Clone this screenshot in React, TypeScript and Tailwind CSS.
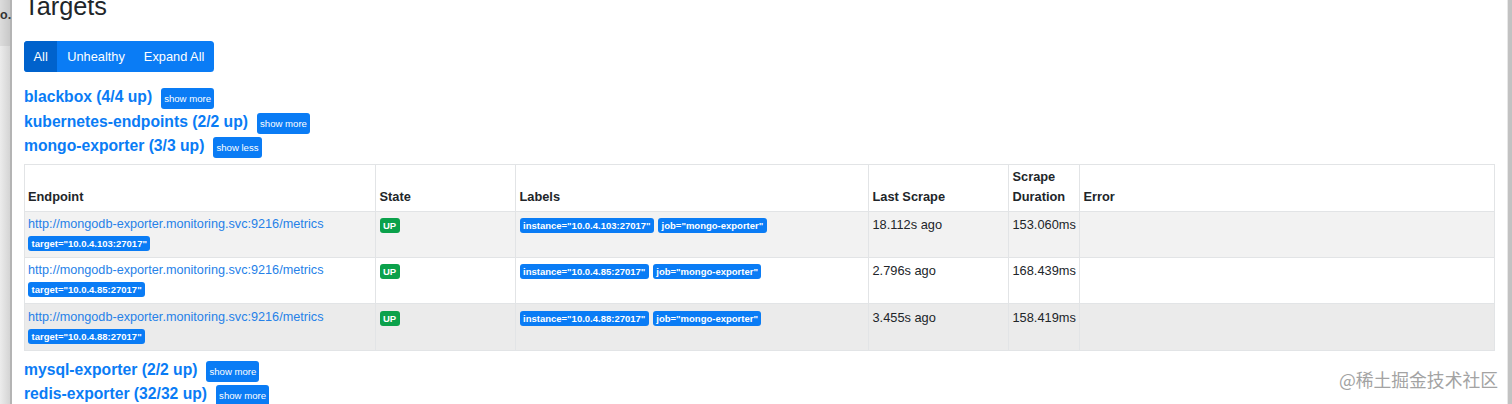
const Btn = ({ children }: { children: string }) => (
  <button className="ml-[9px] h-[21px] rounded-[3px] bg-[#0a7cf5] px-[3px] text-[9.6px] leading-[21px] text-white">{children}</button>
);

const Group = ({ name, btn }: { name: string; btn: string }) => (
  <div className="flex h-[24.5px] items-center">
    <a className="pb-[3.5px] text-[15.7px] font-bold text-[#0a7cf5]">{name}</a>
    <Btn>{btn}</Btn>
  </div>
);

const Badge = ({ children, color = "bg-[#0a7cf5]" }: { children: string; color?: string }) => (
  <span className={`inline-block h-[15px] rounded-[3px] ${color} px-[3.5px] text-[9.5px] font-bold leading-[15px] text-white whitespace-nowrap`}>{children}</span>
);

const rows = [
  { t: "10.0.4.103:27017", last: "18.112s ago", dur: "153.060ms", cls: "h-[46px] bg-[#f2f2f2]" },
  { t: "10.0.4.85:27017", last: "2.796s ago", dur: "168.439ms", cls: "h-[46px] bg-white" },
  { t: "10.0.4.88:27017", last: "3.455s ago", dur: "158.419ms", cls: "h-[46.5px] bg-[#ebebeb] [&>td]:pt-[3.5px]" },
];

const td = "border-l border-[#e2e4e6] px-[3.5px] pt-[2.5px] align-top first:border-l-0 first:pl-[3px]";
const th = "border-l border-[#e2e4e6] px-[3.5px] pb-[4px] align-bottom text-left font-bold first:border-l-0 first:pl-[3px]";

export default function App() {
  return (
    <div className="flex h-[404px] w-[1512px] overflow-hidden bg-white text-[12.8px] text-[#212529] [font-family:'Liberation_Sans',sans-serif]">
      <div className="flex h-full w-[12px] shrink-0 flex-col border-r-[2px] border-[#b4b4b4]">
        <div className="h-[46px] bg-gradient-to-r from-[#dcdcdc] to-[#c8c8c8] pt-[8px] text-[12.5px] font-bold leading-[14px] text-[#333]">o.</div>
        <div className="flex-1 bg-gradient-to-r from-[#ececec] to-[#d4d4d4]" />
      </div>
      <main className="min-w-0 flex-1 overflow-hidden pl-[12px] pr-[13px]">
        <h1 className="mt-[-9px] h-[50px] text-[25.3px] leading-[30px] text-[#212529]">Targets</h1>
        <div className="flex h-[31px] w-[190px] overflow-hidden whitespace-nowrap rounded-[3.5px] bg-[#0a7cf5] text-[12.8px] leading-[31px] text-white">
          <span className="bg-[#0062cc] px-[9.5px]">All</span>
          <span className="px-[10px]">Unhealthy</span>
          <span className="px-[9px]">Expand All</span>
        </div>
        <div className="mt-[14.5px]">
          <Group name="blackbox (4/4 up)" btn="show more" />
          <Group name="kubernetes-endpoints (2/2 up)" btn="show more" />
          <Group name="mongo-exporter (3/3 up)" btn="show less" />
        </div>
        <table className="mt-[4px] w-[1471px] table-fixed border-collapse border border-[#e2e4e6]">
          <colgroup>
            <col className="w-[351px]" />
            <col className="w-[140px]" />
            <col className="w-[353px]" />
            <col className="w-[140px]" />
            <col className="w-[71px]" />
            <col />
          </colgroup>
          <thead>
            <tr className="h-[47px] border-b border-[#e2e4e6] leading-[20px]">
              <th className={th}>Endpoint</th>
              <th className={th}>State</th>
              <th className={th}>Labels</th>
              <th className={th}>Last Scrape</th>
              <th className={th}>Scrape Duration</th>
              <th className={th}>Error</th>
            </tr>
          </thead>
          <tbody>
            {rows.map((r) => (
              <tr key={r.t} className={`${r.cls} border-b border-[#e2e4e6]`}>
                <td className={td}>
                  <a className="block text-[12.66px] leading-[19px] text-[#2681e8]">http://mongodb-exporter.monitoring.svc:9216/metrics</a>
                  <div className="mt-[2px] flex"><Badge>{`target="${r.t}"`}</Badge></div>
                </td>
                <td className={td}>
                  <div className="mt-[3px] flex"><Badge color="bg-[#0ba14b]">UP</Badge></div>
                </td>
                <td className={td}>
                  <div className="mt-[3px] flex gap-[4px]">
                    <Badge>{`instance="${r.t}"`}</Badge>
                    <Badge>job="mongo-exporter"</Badge>
                  </div>
                </td>
                <td className={`${td} leading-[19px]`}>{r.last}</td>
                <td className={`${td} leading-[19px]`}>{r.dur}</td>
                <td className={td} />
              </tr>
            ))}
          </tbody>
        </table>
        <div className="mt-[8.5px]">
          <Group name="mysql-exporter (2/2 up)" btn="show more" />
          <Group name="redis-exporter (32/32 up)" btn="show more" />
        </div>
      </main>
      <div className="relative w-[5px] shrink-0 border-l border-[#e8e8e8] bg-[#c2c2c2]">
        <span className="absolute right-[14px] top-[368px] whitespace-nowrap text-[17.8px] leading-[22px] text-[#a3a3a3] [font-family:'Noto_Sans_CJK_SC',sans-serif]">@稀土掘金技术社区</span>
      </div>
    </div>
  );
}
